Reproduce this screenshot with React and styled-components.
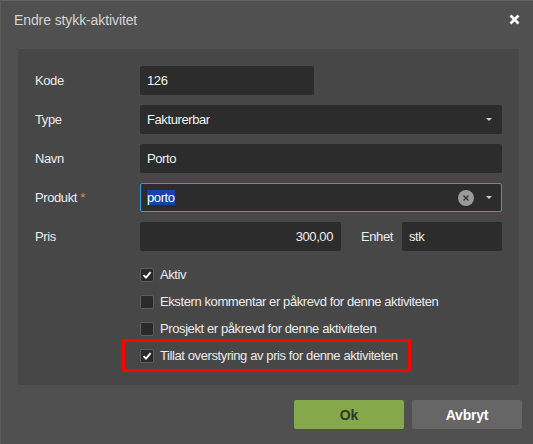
import styled, { createGlobalStyle } from 'styled-components';

const GlobalStyle = createGlobalStyle`
  html, body {
    margin: 0;
    padding: 0;
    background: #505050;
  }
  body {
    font-family: 'Liberation Sans', Arial, sans-serif;
  }
`;

const Dialog = styled.div`
  width: 533px;
  height: 444px;
  box-sizing: border-box;
  background: #505050;
  border-top: 1px solid #626262;
  border-left: 1px solid #5c5c5c;
  display: flex;
  flex-direction: column;
`;

const Header = styled.div`
  height: 37px;
  padding: 0 12px 0 13px;
  display: flex;
  align-items: center;
  justify-content: space-between;
`;

const Title = styled.div`
  color: #d4d4d4;
  font-size: 14px;
  letter-spacing: -0.1px;
`;

const CloseButton = styled.button`
  width: 14px;
  height: 14px;
  padding: 0;
  border: 0;
  background: transparent;
  display: flex;
  align-items: center;
  justify-content: center;
  cursor: pointer;
`;

const Panel = styled.div`
  margin: 11px 14px 0 17px;
  padding: 17px 17px 16px 17px;
  background: #474747;
  border-radius: 2px;
`;

const Form = styled.div`
  display: grid;
  grid-template-columns: 105px 1fr;
  row-gap: 10px;
  align-items: center;
`;

const Label = styled.div`
  color: #ececec;
  font-size: 13px;
  letter-spacing: -0.4px;
`;

const Star = styled.span`
  color: #e8892c;
`;

const Field = styled.div`
  height: 29px;
  box-sizing: border-box;
  width: ${(p) => p.width || 'auto'};
  background: #2c2c2c;
  border-radius: 2px;
  border: 1px solid ${(p) => (p.focused ? '#2b9fdc' : '#2c2c2c')};
  color: #f2f2f2;
  font-size: 13px;
  letter-spacing: -0.4px;
  display: flex;
  align-items: center;
  padding: 0 9px 0 6px;
`;

const FieldText = styled.span`
  flex: 1;
  text-align: ${(p) => (p.right ? 'right' : 'left')};
`;

const Selected = styled.span`
  background: #1743a8;
  color: #ffffff;
`;

const Caret = styled.span`
  width: 0;
  height: 0;
  border-left: 3px solid transparent;
  border-right: 3px solid transparent;
  border-top: 3px solid #d0d0d0;
  margin-left: 12px;
`;

const ClearIcon = styled.span`
  width: 16px;
  height: 16px;
  border-radius: 50%;
  background: #9a9a9a;
  display: flex;
  align-items: center;
  justify-content: center;
`;

const PriceRow = styled.div`
  display: flex;
  align-items: center;
`;

const PriceField = styled(Field)`
  flex: 1;
  padding-right: 7px;
`;

const UnitLabel = styled(Label)`
  padding: 0 9px 0 20px;
`;

const Checks = styled.div`
  margin: 10px 0 0 105px;
  display: flex;
  flex-direction: column;
`;

const CheckRow = styled.label`
  position: relative;
  height: 27px;
  display: flex;
  align-items: center;
  gap: 6px;
  color: #ececec;
  font-size: 13px;
  letter-spacing: -0.4px;
`;

const Highlight = styled.span`
  position: absolute;
  left: -18px;
  top: -3px;
  width: 289px;
  height: 33px;
  box-sizing: border-box;
  border: 3px solid #ff0000;
`;

const Box = styled.span`
  width: 14px;
  height: 14px;
  box-sizing: border-box;
  border: 1px solid #5e5e5e;
  border-radius: 2px;
  background: #2a2a2a;
  display: flex;
  align-items: center;
  justify-content: center;
  flex-shrink: 0;
`;

const Footer = styled.div`
  display: flex;
  justify-content: flex-end;
  gap: 8px;
  padding: 15px 11px 0 0;
`;

const Button = styled.button`
  width: 110px;
  height: 29px;
  border: 0;
  border-radius: 2px;
  font-family: 'Liberation Sans', Arial, sans-serif;
  font-size: 14px;
  font-weight: bold;
  letter-spacing: -0.2px;
  background: ${(p) => (p.primary ? '#84a84b' : '#666666')};
  color: ${(p) => (p.primary ? '#2f3a22' : '#ffffff')};
  cursor: pointer;
`;

const CheckMark = () => (
  <svg width="10" height="10" viewBox="0 0 10 10">
    <path d="M1.5 5.2 L4 7.6 L8.6 2.2" fill="none" stroke="#ffffff" strokeWidth="1.8" />
  </svg>
);

const Check = ({ checked, children, marked }) => (
  <CheckRow>
    {marked && <Highlight />}
    <Box>{checked && <CheckMark />}</Box>
    {children}
  </CheckRow>
);

const App = () => {
  return (
    <>
      <GlobalStyle />
      <Dialog>
        <Header>
          <Title>Endre stykk-aktivitet</Title>
          <CloseButton>
            <svg width="11" height="11" viewBox="0 0 11 11">
              <path d="M1.5 1.5 L9.5 9.5 M9.5 1.5 L1.5 9.5" stroke="#ffffff" strokeWidth="2.6" />
            </svg>
          </CloseButton>
        </Header>
        <Panel>
          <Form>
            <Label>Kode</Label>
            <Field width="174px">126</Field>

            <Label>Type</Label>
            <Field>
              <FieldText>Fakturerbar</FieldText>
              <Caret />
            </Field>

            <Label>Navn</Label>
            <Field>Porto</Field>

            <Label>
              Produkt <Star>*</Star>
            </Label>
            <Field focused>
              <FieldText>
                <Selected>porto</Selected>
              </FieldText>
              <ClearIcon>
                <svg width="8" height="8" viewBox="0 0 8 8">
                  <path d="M1.5 1.5 L6.5 6.5 M6.5 1.5 L1.5 6.5" stroke="#333333" strokeWidth="1.3" />
                </svg>
              </ClearIcon>
              <Caret />
            </Field>

            <Label>Pris</Label>
            <PriceRow>
              <PriceField>
                <FieldText right>300,00</FieldText>
              </PriceField>
              <UnitLabel>Enhet</UnitLabel>
              <Field width="100px">stk</Field>
            </PriceRow>
          </Form>
          <Checks>
            <Check checked>Aktiv</Check>
            <Check>Ekstern kommentar er påkrevd for denne aktiviteten</Check>
            <Check>Prosjekt er påkrevd for denne aktiviteten</Check>
            <Check checked marked>
              Tillat overstyring av pris for denne aktiviteten
            </Check>
          </Checks>
        </Panel>
        <Footer>
          <Button primary>Ok</Button>
          <Button>Avbryt</Button>
        </Footer>
      </Dialog>
    </>
  );
};

export default App;
